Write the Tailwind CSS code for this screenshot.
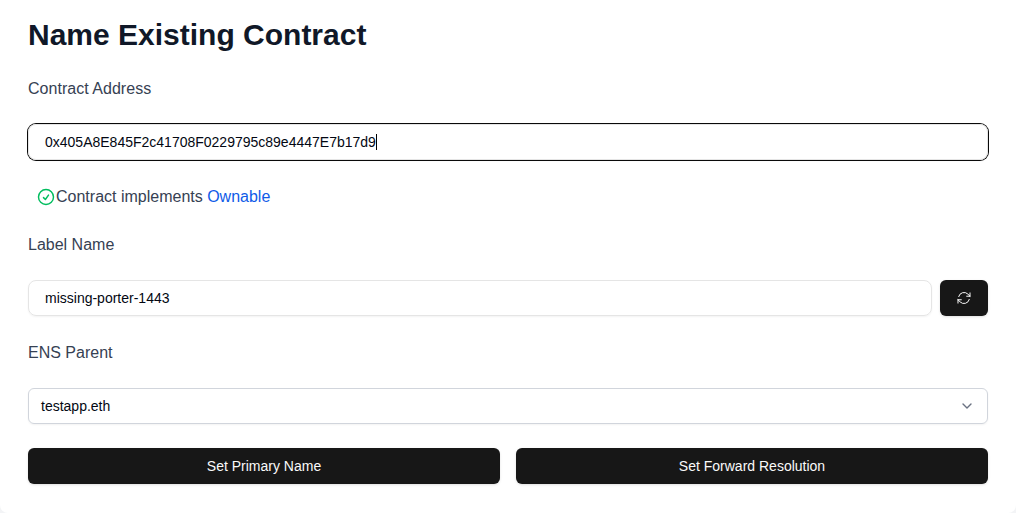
<!DOCTYPE html>
<html lang="en">
<head>
<meta charset="utf-8">
<title>Name Existing Contract</title>
<script src="https://cdn.jsdelivr.net/npm/@tailwindcss/browser@4"></script>
</head>
<body class="h-[513px] overflow-hidden bg-gray-100 font-['Liberation_Sans',Arial,sans-serif]">
<main class="flex h-[513px] flex-col rounded-b-lg bg-white px-7 pt-4">
  <h1 class="text-3xl font-bold leading-[38px] text-gray-900">Name Existing Contract</h1>
  <label class="mt-[22px] text-base leading-[26px] tracking-[0.03px] text-gray-700">Contract Address</label>
  <div class="mt-[22px] flex h-9 items-center rounded-lg border border-neutral-200 px-4 text-sm text-gray-950 shadow-xs ring-1 ring-neutral-950">
    <span>0x405A8E845F2c41708F0229795c89e4447E7b17d9</span><span class="h-4 w-px bg-black"></span>
  </div>
  <div class="mt-6 flex h-[26px] items-center pl-2 text-base text-gray-700">
    <svg class="size-5 text-[#00bd5e]" viewBox="0 0 24 24" fill="none" stroke="currentColor" stroke-width="1.75" stroke-linecap="round" stroke-linejoin="round"><path d="M9 12.75 11.25 15 15 9.75M21 12a9 9 0 1 1-18 0 9 9 0 0 1 18 0Z"/></svg>
    <p>Contract implements <a class="text-[#0f5be8]">Ownable</a></p>
  </div>
  <label class="mt-[22px] text-base leading-[26px] text-gray-700">Label Name</label>
  <div class="mt-[22px] flex gap-2">
    <div class="flex h-9 flex-1 items-center rounded-lg border border-neutral-200 px-4 text-sm text-gray-950 shadow-xs">missing-porter-1443</div>
    <button class="flex h-9 w-12 items-center justify-center rounded-md bg-neutral-900 text-neutral-50 shadow-sm" aria-label="Refresh">
      <svg class="size-4" viewBox="0 0 24 24" fill="none" stroke="currentColor" stroke-width="1.5" stroke-linecap="round" stroke-linejoin="round"><path d="M16.023 9.348h4.992v-.001M2.985 19.644v-4.992m0 0h4.992m-4.993 0 3.181 3.183a8.25 8.25 0 0 0 13.803-3.7M4.031 9.865a8.25 8.25 0 0 1 13.803-3.7l3.181 3.182m0-4.991v4.99"/></svg>
    </button>
  </div>
  <label class="mt-6 text-base leading-[26px] text-gray-700">ENS Parent</label>
  <div class="mt-[22px] flex h-9 items-center justify-between rounded-md border border-gray-300 px-3 text-sm text-gray-950 shadow-xs">
    <span>testapp.eth</span>
    <svg class="size-4 text-gray-500" viewBox="0 0 16 16" fill="none" stroke="currentColor" stroke-width="1.4" stroke-linecap="round" stroke-linejoin="round"><path d="m4 6 4 4 4-4"/></svg>
  </div>
  <div class="mt-6 grid grid-cols-2 gap-4">
    <button class="h-9 rounded-md bg-neutral-900 text-sm text-neutral-50 shadow-sm">Set Primary Name</button>
    <button class="h-9 rounded-md bg-neutral-900 text-sm text-neutral-50 shadow-sm">Set Forward Resolution</button>
  </div>
</main>
</body>
</html>
